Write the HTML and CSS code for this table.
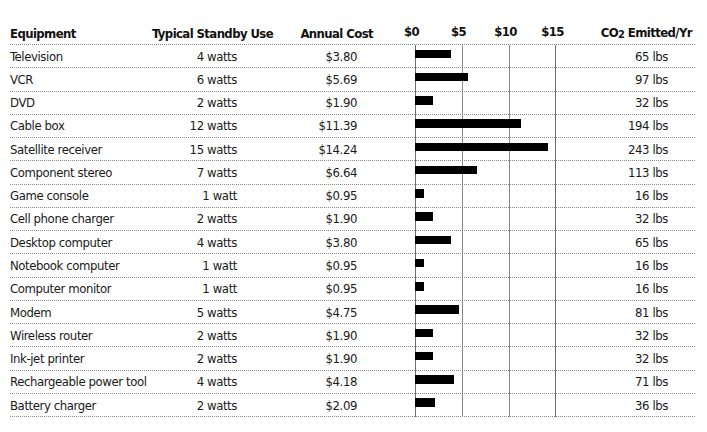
FILE: index.html
```html
<!DOCTYPE html>
<html>
<head>
<meta charset="utf-8">
<link rel="stylesheet" href="styles.css">
</head>
<body>
<div class="chart">
  <div class="row head">
    <div class="c1">Equipment</div>
    <div class="c2">Typical Standby Use</div>
    <div class="c3">Annual Cost</div>
    <div class="c4"><div class="scale"><span>$0</span><span>$5</span><span>$10</span><span>$15</span></div></div>
    <div class="c5">CO<span class="sub">2</span> Emitted/Yr</div>
  </div>
  <div class="body">
    <div class="row"><div class="c1">Television</div><div class="c2">4 watts</div><div class="c3">$3.80</div><div class="c4"><div class="bar" style="--v:3.80"></div></div><div class="c5">65 lbs</div></div>
    <div class="row"><div class="c1">VCR</div><div class="c2">6 watts</div><div class="c3">$5.69</div><div class="c4"><div class="bar" style="--v:5.69"></div></div><div class="c5">97 lbs</div></div>
    <div class="row"><div class="c1">DVD</div><div class="c2">2 watts</div><div class="c3">$1.90</div><div class="c4"><div class="bar" style="--v:1.90"></div></div><div class="c5">32 lbs</div></div>
    <div class="row"><div class="c1">Cable box</div><div class="c2">12 watts</div><div class="c3">$11.39</div><div class="c4"><div class="bar" style="--v:11.39"></div></div><div class="c5">194 lbs</div></div>
    <div class="row"><div class="c1">Satellite receiver</div><div class="c2">15 watts</div><div class="c3">$14.24</div><div class="c4"><div class="bar" style="--v:14.24"></div></div><div class="c5">243 lbs</div></div>
    <div class="row"><div class="c1">Component stereo</div><div class="c2">7 watts</div><div class="c3">$6.64</div><div class="c4"><div class="bar" style="--v:6.64"></div></div><div class="c5">113 lbs</div></div>
    <div class="row"><div class="c1">Game console</div><div class="c2">1 watt</div><div class="c3">$0.95</div><div class="c4"><div class="bar" style="--v:0.95"></div></div><div class="c5">16 lbs</div></div>
    <div class="row"><div class="c1">Cell phone charger</div><div class="c2">2 watts</div><div class="c3">$1.90</div><div class="c4"><div class="bar" style="--v:1.90"></div></div><div class="c5">32 lbs</div></div>
    <div class="row"><div class="c1">Desktop computer</div><div class="c2">4 watts</div><div class="c3">$3.80</div><div class="c4"><div class="bar" style="--v:3.80"></div></div><div class="c5">65 lbs</div></div>
    <div class="row"><div class="c1">Notebook computer</div><div class="c2">1 watt</div><div class="c3">$0.95</div><div class="c4"><div class="bar" style="--v:0.95"></div></div><div class="c5">16 lbs</div></div>
    <div class="row"><div class="c1">Computer monitor</div><div class="c2">1 watt</div><div class="c3">$0.95</div><div class="c4"><div class="bar" style="--v:0.95"></div></div><div class="c5">16 lbs</div></div>
    <div class="row"><div class="c1">Modem</div><div class="c2">5 watts</div><div class="c3">$4.75</div><div class="c4"><div class="bar" style="--v:4.75"></div></div><div class="c5">81 lbs</div></div>
    <div class="row"><div class="c1">Wireless router</div><div class="c2">2 watts</div><div class="c3">$1.90</div><div class="c4"><div class="bar" style="--v:1.90"></div></div><div class="c5">32 lbs</div></div>
    <div class="row"><div class="c1">Ink-jet printer</div><div class="c2">2 watts</div><div class="c3">$1.90</div><div class="c4"><div class="bar" style="--v:1.90"></div></div><div class="c5">32 lbs</div></div>
    <div class="row"><div class="c1">Rechargeable power tool</div><div class="c2">4 watts</div><div class="c3">$4.18</div><div class="c4"><div class="bar" style="--v:4.18"></div></div><div class="c5">71 lbs</div></div>
    <div class="row"><div class="c1">Battery charger</div><div class="c2">2 watts</div><div class="c3">$2.09</div><div class="c4"><div class="bar" style="--v:2.09"></div></div><div class="c5">36 lbs</div></div>
  </div>
</div>
</body>
</html>
```
FILE: styles.css
```css
html, body {
  margin: 0;
  padding: 0;
  background: #fff;
}
body {
  font-family: "DejaVu Sans Condensed", "Liberation Sans", sans-serif;
  font-size: 13px;
  letter-spacing: -0.4px;
  color: #1a1a1a;
}
.chart {
  width: 685px;
  margin-left: 10px;
  margin-top: 24px;
}
.row {
  display: grid;
  grid-template-columns: 140px 130px 135px 165px 115px;
  box-sizing: border-box;
  height: 23.27px;
  border-bottom: 1px dotted #8a8a8a;
  align-items: center;
  line-height: 16px;
  white-space: nowrap;
}
.body .c1, .body .c2, .body .c3, .body .c5 {
  padding-top: 1px;
}
.row.head {
  height: 21px;
  align-items: end;
  padding-bottom: 2px;
  font-weight: bold;
  letter-spacing: -0.6px;
  color: #111;
}
.c2, .c3, .c5 { text-align: right; }
.c2 { padding-right: 43px; }
.c3 { padding-right: 58px; }
.c5 { padding-right: 27px; }
.head .c2 { padding-right: 7px; }
.head .c3 { padding-right: 42px; }
.head .c5 { padding-right: 3px; }
.sub {
  font-size: 11px;
  position: relative;
  top: 1px;
}
.scale {
  display: flex;
  margin-left: -27px;
}
.scale span {
  width: 47px;
  flex: none;
  text-align: center;
}
.c4 {
  align-self: stretch;
}
.body .c4 {
  padding-top: 4.5px;
}
.bar {
  height: 8.5px;
  width: calc(var(--v) * 9.35px);
  background: #000;
}
.body {
  background-image:
    linear-gradient(#6e6e6e, #6e6e6e),
    linear-gradient(#8a8a8a, #8a8a8a),
    linear-gradient(#8a8a8a, #8a8a8a),
    linear-gradient(#6e6e6e, #6e6e6e);
  background-size: 1px 100%;
  background-repeat: no-repeat;
  background-position: 405px 0, 452px 0, 499px 0, 545px 0;
}
```
